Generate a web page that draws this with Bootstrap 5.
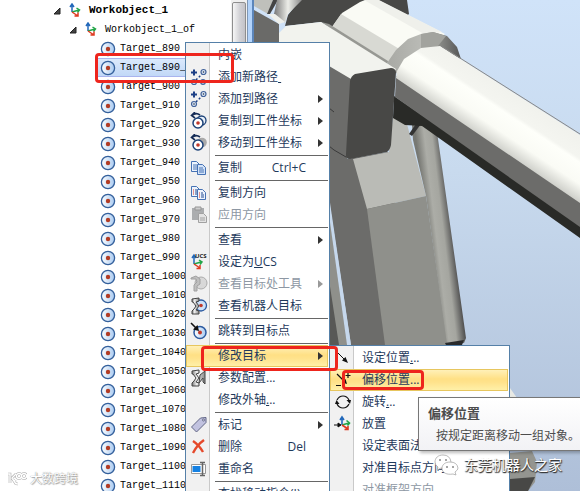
<!DOCTYPE html>
<html lang="zh-CN">
<head>
<meta charset="utf-8">
<meta name="viewport" content="width=device-width, initial-scale=1">
<title>Workobject_1</title>
<link href="https://cdn.jsdelivr.net/npm/bootstrap@5.3.0/dist/css/bootstrap.min.css" rel="stylesheet">
<style>
body { font: 12px/18px "Open Sans", "Noto Sans CJK SC", sans-serif; color: #1e395b; }
.tree-pane { flex: 0 0 231px; padding-top: 1px; }
.tree-row { height: 19px; font: 10px/19px "Liberation Mono", monospace; color: #000; white-space: nowrap; }
.tree-row svg { flex: none; }
.tree-root { padding-left: 53px; font-size: 11px; font-weight: bold; }
.tree-frame { padding-left: 69px; }
.tree-target { margin-left: 98px; padding-left: 2px; }
.tree-target.chosen { background: linear-gradient(#dbe9fc, #c1d8f7); border-top: 1px solid #a9b4ee; border-bottom: 1px solid #a9b4ee; }
.scroll-rail { flex: 0 0 16px; background: #f0f0f0; padding: 2px 1px; }
.scroll-thumb { height: 12%; border: 1px solid #8e8e8e; border-radius: 2px; background: linear-gradient(90deg, #f6f6f6, #d2d2d6 55%, #c2c2c8); }
.pane-split { flex: 0 0 7px; background: #b3d3fa; border-left: 1px solid #7f97b5; border-right: 2px solid #5c86bb; }
.scene { background: linear-gradient(#d0e3f9, #c8daee 35%, #aebfd8); }
.flyout { background: linear-gradient(90deg, #f1f1f1 23px, #c9c9c9 23px, #c9c9c9 24px, #fff 24px); border: 1px solid #5580a8; padding: 1px 1px 0 0; height: max-content; }
.main-flyout { left: 185px; top: 42px; width: 145px; z-index: 2; }
.sub-flyout { left: 329px; top: 345px; width: 181px; z-index: 3; }
.flyout button { height: 22px; padding: 0 4px 0 3px; border: 1px solid transparent; background: none; color: #1e395b; gap: 10px; text-align: left; line-height: 18px; white-space: nowrap; }
.flyout button svg { flex: 0 0 18px; width: 18px; height: 18px; overflow: visible; }
.flyout button:disabled { color: #8d97a3; }
.flyout button:disabled svg { opacity: .65; }
.flyout button.hot { background: linear-gradient(#fff0b8, #ffe085 45%, #ffe28b 60%, #fff0a8); border-color: #e7c65e; }
.flyout button .key { margin-right: 17px; }
.flyout .arrow { border: 4px solid transparent; border-left: 5px solid #333; border-right: 0; }
.flyout button:disabled .arrow { border-left-color: #999; }
.flyout hr { margin: 1px 0 1px 29px; border-top: 1px solid #666; opacity: 1; }
.tip { left: 418px; top: 397px; width: 170px; padding: 5px 9px 5px 9px; background: linear-gradient(#fff, #f2f2f5); border: 1px solid #777; color: #4c4c4c; z-index: 4; box-shadow: 2px 2px 3px #0004; }
.tip strong { display: block; font-size: 13px; line-height: 20px; }
.tip p { margin: 4px 0 0 8px; white-space: nowrap; }
.ring { border: 3px solid #ee251d; border-radius: 4px; z-index: 6; pointer-events: none; }
.ring-row { left: 95px; top: 53px; width: 139px; height: 30px; }
.ring-modify { left: 201px; top: 346px; width: 137px; height: 25px; }
.ring-offset { left: 342px; top: 370px; width: 82px; height: 20px; }
.credit { z-index: 5; color: #fff; gap: 5px; white-space: nowrap; }
.credit-right { left: 434px; top: 453px; font-size: 14px; line-height: 24px; text-shadow: 1px 1px 1px #333, 0 1px 1px #444; }
.credit-left { left: 7px; top: 470px; gap: 3px; text-shadow: 0 0 1px #777, 1px 1px 1px #aaa; }
</style>
<script src="https://cdn.jsdelivr.net/npm/bootstrap@5.3.0/dist/js/bootstrap.bundle.min.js"></script>
</head>
<body class="vh-100 overflow-hidden position-relative">
<svg class="position-absolute" width="0" height="0" aria-hidden="true">
  <defs>
    <linearGradient id="gBall"><stop stop-color="#fff"/><stop offset="1" stop-color="#a8caf1"/></linearGradient>
    <linearGradient id="gArm"><stop stop-color="#777"/><stop offset=".35" stop-color="#eee"/><stop offset="1" stop-color="#888"/></linearGradient>
  </defs>
  <symbol id="target" viewBox="0 0 16 16"><circle cx="8" cy="8" r="6.6" fill="url(#gBall)" stroke="#34609c" stroke-width="1.3"/><circle cx="8" cy="8" r="2.2" fill="#b23c25"/></symbol>
  <symbol id="axes" viewBox="0 0 12 15"><g fill="none" stroke-width="1.500"><path d="M3 9V2M1 4l2-3 2 3" stroke="#2268ba"/><path d="M3 9l7-2M7.500 5l3 2-2 2.500" stroke="#22a548"/><path d="M3 9l6 4M9 9.500v3.500H5.500" stroke="#df3a20"/></g></symbol>
  <symbol id="open" viewBox="0 0 8 8"><path d="M7 1v6H1z" fill="#444" stroke="#222"/></symbol>
  <symbol id="path" viewBox="0 0 18 18"><path d="M1 4.500h6M4 1.500v6" stroke="#1c3f85" stroke-width="2"/><path d="M6 12l6-6" stroke="#1c3f85" stroke-width="1.500" stroke-dasharray="2 2"/><g fill="#dce6f5" stroke="#42639b" stroke-width="1.200"><circle cx="13.500" cy="4" r="2.500"/><circle cx="4" cy="14" r="2.500"/></g><circle cx="13.500" cy="4" r=".8" fill="#234"/><circle cx="4" cy="14" r=".8" fill="#234"/></symbol>
  <symbol id="pathnew" viewBox="0 0 18 18"><use href="#path"/><circle cx="13" cy="14" r="2.300" fill="#dce6f5" stroke="#42639b" stroke-width="1.200"/><circle cx="13" cy="14" r=".8" fill="#234"/></symbol>
  <symbol id="copyto" viewBox="0 0 18 18"><circle cx="11.500" cy="8.500" r="4.500" fill="#e8f1fb" stroke="#1c4278" stroke-width="1.300"/><circle cx="8" cy="11" r="5" fill="#fff" stroke="#1c4278" stroke-width="1.500"/><circle cx="8" cy="11" r="1.800" fill="#c0392b"/><path d="M2 3.500q4-3.500 8-.5M5 0L1.500 3.500 5 6" fill="none" stroke="#152c56" stroke-width="1.600"/></symbol>
  <symbol id="moveto" viewBox="0 0 18 18"><circle cx="12" cy="8.500" r="4.800" fill="#aaa"/><circle cx="8" cy="11" r="5" fill="#fff" stroke="#1c4278" stroke-width="1.500"/><circle cx="8" cy="11" r="1.800" fill="#c0392b"/><path d="M2 3.500q4-3.500 8-.5M5 0L1.500 3.500 5 6" fill="none" stroke="#152c56" stroke-width="1.600"/></symbol>
  <symbol id="copy" viewBox="0 0 18 18"><g fill="#edf4fd" stroke="#4672b4"><path d="M1.500 2.500h5l3 3v7h-8z"/><path d="M7.500 5.500h5l3 3v7h-8z" fill="#d3e3f8"/></g><path d="M3 6h4M3 8h4M3 10h4M9 9h4M9 11h5M9 13h5" stroke="#4672b4"/></symbol>
  <symbol id="copydir" viewBox="0 0 18 18"><g fill="#edf4fd" stroke="#4672b4"><path d="M1.500 2.500h5l3 3v7h-8z"/><path d="M7.500 5.500h5l3 3v7h-8z"/></g><path d="M3 6h1M3 8h1M3 10h1M9 9h1M9 11h1M9 13h1" stroke="#d32"/><path d="M5 6h2M5 8h2M5 10h2M11 9h2M11 11h3M11 13h3" stroke="#234a91"/></symbol>
  <symbol id="paste" viewBox="0 0 18 18"><path d="M2 2h12v12H2z" fill="#87898d"/><path d="M5 1h6v3H5z" fill="#bbb" stroke="#666"/><path d="M8.500 7.500h5l3 3v6h-8z" fill="#ddd" stroke="#777"/><path d="M10 12h5M10 14h5" stroke="#777"/></symbol>
  <symbol id="ucs" viewBox="0 0 18 18"><g fill="none" stroke-width="1.500"><path d="M4 11V3M2 5l2-3 2 3" stroke="#2268ba"/><path d="M4 11l7-2M9 7l3 2-2 2.500" stroke="#22a548"/><path d="M4 11l6 4M10 12v3.500H6.500" stroke="#df3a20"/></g><text x="5" y="5" font-family="Open Sans, sans-serif" font-weight="700" font-size="6" fill="#222">UCS</text></symbol>
  <symbol id="tool" viewBox="0 0 18 18"><circle cx="11" cy="8" r="6" fill="#ccc" stroke="#888"/><path d="M1 3l5-2 4 3v5l-3 2v5H4v-6l3-3-1-3H1z" fill="#a5a5a5" stroke="#777"/></symbol>
  <symbol id="robot" viewBox="0 0 18 18"><circle cx="11" cy="8.500" r="5.500" fill="#cce1f8" stroke="#2c5aa0" stroke-width="1.300"/><circle cx="11" cy="8.500" r="1.800" fill="#c0392b"/><path d="M2 2l7-1v3L6 5l3 4-3 4 3 1v3H2v-3l2-2 2-3-3-4H2z" fill="url(#gArm)" stroke="#444"/></symbol>
  <symbol id="jump" viewBox="0 0 18 18"><circle cx="10" cy="10.500" r="6" fill="url(#gBall)" stroke="#2c5aa0" stroke-width="1.500"/><circle cx="10" cy="10.500" r="2" fill="#c0392b"/><path d="M1 1l6 6" stroke="#111" stroke-width="1.600"/><path d="M9 9L3 7.500 7.500 3z" fill="#111"/></symbol>
  <symbol id="config" viewBox="0 0 18 18"><path d="M2 2l7-1v3L6 5l3 4-3 4 3 1v3H2v-3l2-2 2-3-3-4H2zM10 6l5-4v13l-2-2V9l-4 5z" fill="url(#gArm)" stroke="#444"/></symbol>
  <symbol id="label" viewBox="0 0 18 18"><path d="M1.500 11l9-9 5.500-.5v5l-9.500 9.500z" fill="#c1c2df" stroke="#626786"/><circle cx="13.500" cy="4" r="1" fill="#fff" stroke="#626786"/></symbol>
  <symbol id="del" viewBox="0 0 18 18"><path d="M3 3q6 4 10 11M14 2Q7 7 3 15" fill="none" stroke="#e5492b" stroke-width="2.400"/></symbol>
  <symbol id="rename" viewBox="0 0 18 18"><path d="M1.500 4.500h14v9h-14z" fill="#fff" stroke="#999"/><path d="M2.500 6h8v6h-8z" fill="#1681e2"/><path d="M10 2.500h5M12.500 2.500v13M10 15.500h5" stroke="#666" stroke-width="1.500"/></symbol>
  <symbol id="setpos" viewBox="0 0 18 18"><path d="M4 4l7 7" stroke="#111"/><path d="M14 14L8 11.500 11.500 8z" fill="#111"/></symbol>
  <symbol id="offset" viewBox="0 0 18 18"><path d="M3 3l8 8M14 2v5M11.500 4.500h5M2 14.500h5" stroke="#111" stroke-width="1.200"/><path d="M13 13L8 11.500 11.500 8z" fill="#111"/></symbol>
  <symbol id="rotate" viewBox="0 0 18 18"><path d="M3 7q2-4 6-4 4 0 6 4M15 11q-2 4-6 4-4 0-6-4" fill="none" stroke="#111" stroke-width="1.200"/><path d="M12.500 7H17l-1 4zM5.500 11H1l1.500-4z" fill="#111"/></symbol>
  <symbol id="place" viewBox="0 0 18 18"><g fill="none" stroke-width="1.600"><path d="M8 10V2M6 5l2-3 2 3" stroke="#2268ba"/><path d="M8 10l7-2M12.500 5.500l3 2.500-2 2.500" stroke="#22a548"/><path d="M8 10l6 4M14 11v3.500h-3.500" stroke="#df3a20"/></g><path d="M0 10h6M4 8l3 2-3 2z" stroke="#111"/></symbol>
</svg>

<div class="d-flex h-100">
  <nav class="tree-pane overflow-hidden bg-white" aria-label="Workobject_1">
    <ul class="list-unstyled m-0">
      <li class="tree-row tree-root d-flex align-items-center"><svg width="8" height="8"><use href="#open"/></svg><svg class="ms-2 me-1" width="12" height="15"><use href="#axes"/></svg><span class="ms-1">Workobject_1</span></li>
      <li class="tree-row tree-frame d-flex align-items-center"><svg width="8" height="8"><use href="#open"/></svg><svg class="ms-2 me-1" width="12" height="15"><use href="#axes"/></svg><span class="ms-1">Workobject_1_of</span></li>
      <li class="tree-row tree-target d-flex align-items-center gap-1"><svg width="16" height="16"><use href="#target"/></svg>Target_890</li>
      <li class="tree-row tree-target chosen d-flex align-items-center gap-1"><svg width="16" height="16"><use href="#target"/></svg>Target_890_</li>
      <li class="tree-row tree-target d-flex align-items-center gap-1"><svg width="16" height="16"><use href="#target"/></svg>Target_900</li>
      <li class="tree-row tree-target d-flex align-items-center gap-1"><svg width="16" height="16"><use href="#target"/></svg>Target_910</li>
      <li class="tree-row tree-target d-flex align-items-center gap-1"><svg width="16" height="16"><use href="#target"/></svg>Target_920</li>
      <li class="tree-row tree-target d-flex align-items-center gap-1"><svg width="16" height="16"><use href="#target"/></svg>Target_930</li>
      <li class="tree-row tree-target d-flex align-items-center gap-1"><svg width="16" height="16"><use href="#target"/></svg>Target_940</li>
      <li class="tree-row tree-target d-flex align-items-center gap-1"><svg width="16" height="16"><use href="#target"/></svg>Target_950</li>
      <li class="tree-row tree-target d-flex align-items-center gap-1"><svg width="16" height="16"><use href="#target"/></svg>Target_960</li>
      <li class="tree-row tree-target d-flex align-items-center gap-1"><svg width="16" height="16"><use href="#target"/></svg>Target_970</li>
      <li class="tree-row tree-target d-flex align-items-center gap-1"><svg width="16" height="16"><use href="#target"/></svg>Target_980</li>
      <li class="tree-row tree-target d-flex align-items-center gap-1"><svg width="16" height="16"><use href="#target"/></svg>Target_990</li>
      <li class="tree-row tree-target d-flex align-items-center gap-1"><svg width="16" height="16"><use href="#target"/></svg>Target_1000</li>
      <li class="tree-row tree-target d-flex align-items-center gap-1"><svg width="16" height="16"><use href="#target"/></svg>Target_1010</li>
      <li class="tree-row tree-target d-flex align-items-center gap-1"><svg width="16" height="16"><use href="#target"/></svg>Target_1020</li>
      <li class="tree-row tree-target d-flex align-items-center gap-1"><svg width="16" height="16"><use href="#target"/></svg>Target_1030</li>
      <li class="tree-row tree-target d-flex align-items-center gap-1"><svg width="16" height="16"><use href="#target"/></svg>Target_1040</li>
      <li class="tree-row tree-target d-flex align-items-center gap-1"><svg width="16" height="16"><use href="#target"/></svg>Target_1050</li>
      <li class="tree-row tree-target d-flex align-items-center gap-1"><svg width="16" height="16"><use href="#target"/></svg>Target_1060</li>
      <li class="tree-row tree-target d-flex align-items-center gap-1"><svg width="16" height="16"><use href="#target"/></svg>Target_1070</li>
      <li class="tree-row tree-target d-flex align-items-center gap-1"><svg width="16" height="16"><use href="#target"/></svg>Target_1080</li>
      <li class="tree-row tree-target d-flex align-items-center gap-1"><svg width="16" height="16"><use href="#target"/></svg>Target_1090</li>
      <li class="tree-row tree-target d-flex align-items-center gap-1"><svg width="16" height="16"><use href="#target"/></svg>Target_1100</li>
      <li class="tree-row tree-target d-flex align-items-center gap-1"><svg width="16" height="16"><use href="#target"/></svg>Target_1110</li>
    </ul>
  </nav>
  <div class="scroll-rail"><div class="scroll-thumb"></div></div>
  <div class="pane-split"></div>
  <main class="scene flex-fill overflow-hidden">
    <svg class="d-block w-100 h-100" viewBox="254 0 326 491" preserveAspectRatio="xMinYMin slice" aria-hidden="true">
      <defs>
        <linearGradient id="gTube" gradientUnits="userSpaceOnUse" x1="510" y1="90" x2="470" y2="150"><stop stop-color="#f1f2ed"/><stop offset=".25" stop-color="#f4f5f0"/><stop offset=".3" stop-color="#fefffa"/><stop offset=".55" stop-color="#fafbf5"/><stop offset=".95" stop-color="#a9aaa5"/></linearGradient>
        <linearGradient id="gRod" gradientUnits="userSpaceOnUse" x1="428" y1="240" x2="453" y2="237"><stop stop-color="#777873"/><stop offset=".35" stop-color="#acada7"/><stop offset=".65" stop-color="#a5a6a0"/><stop offset="1" stop-color="#555"/></linearGradient>
        <linearGradient id="gCap"><stop stop-color="#a8a9a4"/><stop offset=".5" stop-color="#bbbcb7"/><stop offset=".7" stop-color="#8b8c88"/><stop offset="1" stop-color="#555"/></linearGradient>
        <linearGradient id="gHub"><stop stop-color="#777"/><stop offset=".5" stop-color="#ecede8"/><stop offset="1" stop-color="#888"/></linearGradient>
      </defs>
      <path d="M300 0H407L409 14 390 30 340 35 321 22 285 26 288 15z" fill="#484846"/>
      <path d="M254 10L279 24V42H254z" fill="#6a6a68"/>
      <path d="M254 0H273L268 14 254 6z" fill="#bfc0bb"/><path d="M273 0H278L270 14H267z" fill="#444"/>
      <path d="M277 0H302L288 14 285 23 274 14z" fill="url(#gHub)"/>
      <path d="M268 14L275 14 285 22 279 24z" fill="#eff0eb"/>
      <path d="M332 27L342 13 360 2 365 0H378L445 34 410 55 387 63z" fill="#fafbf5"/>
      <path d="M332 27L341 14 401 50 387 63z" fill="#d8d9d3"/>
      <path d="M364 0H379L442 32 424 34z" fill="#eff0eb"/>
      <path d="M321 22L329 24 388 61 387 66z" fill="#979893"/>
      <path d="M387 63L396 50 408 39 421 34 433 32 447 36 457 47 461 59 440 50 398 75z" fill="url(#gCap)"/>
      <path d="M421 34L433 32 446 36 438 46 421 50z" fill="#a2a39e"/>
      <path d="M279 42V33L286 26 321 22 396 69 393 73 355 75 350 80 329 66z" fill="#f2f3ee"/>
      <path d="M329 66L351 79 347 159 388 152 415 345H351L329 200z" fill="#6c6c6a"/>
      <path d="M353 159L389 152 393 117 407 124 426 196 367 209z" fill="#babbb6"/>
      <path d="M367 209L426 196 448 345H385z" fill="#8f908b"/>
      <path d="M329 196L351 345H347L329 215z" fill="#c6d8ec"/>
      <path d="M329 215L347 345H329z" fill="#8f908b"/><path d="M329 280L339 345H329z" fill="#585856"/>
      <path d="M412 125H436L441 160 466 338 464 343 447 344 426 196 413 140z" fill="url(#gRod)"/>
      <path d="M445 343L464 340 462 345H446z" fill="#292a2b"/>
      <path d="M409 134L418 121 421 124 412 136z" fill="#333"/>
      <path d="M394 96L580 223V238L422 126 405 125 393 118z" fill="#292a27"/>
      <path d="M396 76L580 200V227L395 97z" fill="#6c6c6a"/>
      <path d="M396 78L397 71 404 59 421 48 440 46 580 135V203z" fill="url(#gTube)"/>
      <path d="M441 46L580 134" stroke="#888" fill="none"/>
      <path d="M355 74L391 68Q395 68 396 72L391 145Q390 150 387 152L350 159Q345 159 346 154L350 81Q351 76 355 74z" fill="#484846"/>
      <path d="M329 108L334 112M329 146L334 150 346 157" fill="none" stroke="#3a3a3a"/>
      <path d="M510 388L517 398H510z" fill="#e8e9e4"/>
      <path d="M510 453L532 451 537 462 535 482 528 491H510z" fill="#949590"/>
      <path d="M510 479L535 477 528 491H510z" fill="#484846"/>
    </svg>
  </main>
</div>

<div class="flyout main-flyout position-absolute" role="menu">
  <button class="d-flex align-items-center w-100"><svg></svg>内嵌</button>
  <button class="d-flex align-items-center w-100"><svg><use href="#pathnew"/></svg><span>添加新路径<u>&nbsp;</u></span></button>
  <button class="d-flex align-items-center w-100"><svg><use href="#path"/></svg>添加到路径<i class="arrow ms-auto"></i></button>
  <button class="d-flex align-items-center w-100"><svg><use href="#copyto"/></svg>复制到工件坐标<i class="arrow ms-auto"></i></button>
  <button class="d-flex align-items-center w-100"><svg><use href="#moveto"/></svg>移动到工件坐标<i class="arrow ms-auto"></i></button>
  <hr>
  <button class="d-flex align-items-center w-100"><svg><use href="#copy"/></svg>复制<span class="key ms-auto">Ctrl+C</span></button>
  <hr>
  <button class="d-flex align-items-center w-100"><svg><use href="#copydir"/></svg>复制方向</button>
  <button class="d-flex align-items-center w-100" disabled><svg><use href="#paste"/></svg>应用方向</button>
  <hr>
  <button class="d-flex align-items-center w-100"><svg></svg>查看<i class="arrow ms-auto"></i></button>
  <button class="d-flex align-items-center w-100"><svg><use href="#ucs"/></svg><span>设定为<u>U</u>CS</span></button>
  <button class="d-flex align-items-center w-100" disabled><svg><use href="#tool"/></svg>查看目标处工具<i class="arrow ms-auto"></i></button>
  <button class="d-flex align-items-center w-100"><svg><use href="#robot"/></svg>查看机器人目标</button>
  <hr>
  <button class="d-flex align-items-center w-100"><svg><use href="#jump"/></svg>跳转到目标点</button>
  <hr>
  <button class="d-flex align-items-center w-100 hot"><svg></svg>修改目标<i class="arrow ms-auto"></i></button>
  <button class="d-flex align-items-center w-100"><svg><use href="#config"/></svg>参数配置...</button>
  <button class="d-flex align-items-center w-100"><svg></svg><span>修改外轴<u>.</u>..</span></button>
  <hr>
  <button class="d-flex align-items-center w-100"><svg><use href="#label"/></svg>标记<i class="arrow ms-auto"></i></button>
  <button class="d-flex align-items-center w-100"><svg><use href="#del"/></svg>删除<span class="key ms-auto">Del</span></button>
  <button class="d-flex align-items-center w-100"><svg><use href="#rename"/></svg>重命名</button>
  <hr>
  <button class="d-flex align-items-center w-100"><svg></svg>查找移动指令(I)</button>
</div>

<div class="flyout sub-flyout position-absolute" role="menu">
  <button class="d-flex align-items-center w-100"><svg><use href="#setpos"/></svg><span>设定位置<u>.</u>..</span></button>
  <button class="d-flex align-items-center w-100 hot"><svg><use href="#offset"/></svg>偏移位置...</button>
  <button class="d-flex align-items-center w-100"><svg><use href="#rotate"/></svg><span>旋转<u>.</u>..</span></button>
  <button class="d-flex align-items-center w-100"><svg><use href="#place"/></svg>放置</button>
  <button class="d-flex align-items-center w-100"><svg></svg>设定表面法线方向</button>
  <button class="d-flex align-items-center w-100"><svg></svg>对准目标点方向</button>
  <button class="d-flex align-items-center w-100" disabled><svg></svg>对准框架方向</button>
</div>

<div class="tip position-absolute" role="tooltip"><strong>偏移位置</strong><p>按规定距离移动一组对象。</p></div>

<div class="ring ring-row position-absolute"></div>
<div class="ring ring-modify position-absolute"></div>
<div class="ring ring-offset position-absolute"></div>

<div class="credit credit-right d-flex align-items-center position-absolute">
  <svg width="25" height="22" viewBox="0 0 25 22" aria-hidden="true"><g fill="#fff" stroke="#aaa" stroke-width=".8"><path d="M9 1C4 1 1 4 1 8q0 3 3 5l-1 3 4-2q10 1 10-6Q16 1 9 1z"/><path d="M16 8c-5 0-8 3-8 6 0 5 5 7 11 6l3 1-1-3q3-2 3-4-1-6-8-6z"/></g><g fill="#888"><circle cx="6" cy="6" r="1"/><circle cx="12" cy="6" r="1"/><circle cx="13" cy="13" r="1"/><circle cx="19" cy="13" r="1"/></g></svg>
  东莞机器人之家
</div>
<div class="credit credit-left d-flex align-items-center position-absolute">
  <svg width="20" height="14" viewBox="0 0 20 14" fill="none" aria-hidden="true"><g stroke="#aaa" stroke-width="2.600"><path d="M1 2h2v9M9 2L5 6l4 6M11 12q-4 0-3-4"/><circle cx="12" cy="4" r="2.500"/><circle cx="17" cy="4" r="2.500"/></g><g stroke="#fff" stroke-width="1.400"><path d="M1 2h2v9M9 2L5 6l4 6M11 12q-4 0-3-4"/><circle cx="12" cy="4" r="2.500"/><circle cx="17" cy="4" r="2.500"/></g></svg>
  大数跨境
</div>
</body>
</html>
